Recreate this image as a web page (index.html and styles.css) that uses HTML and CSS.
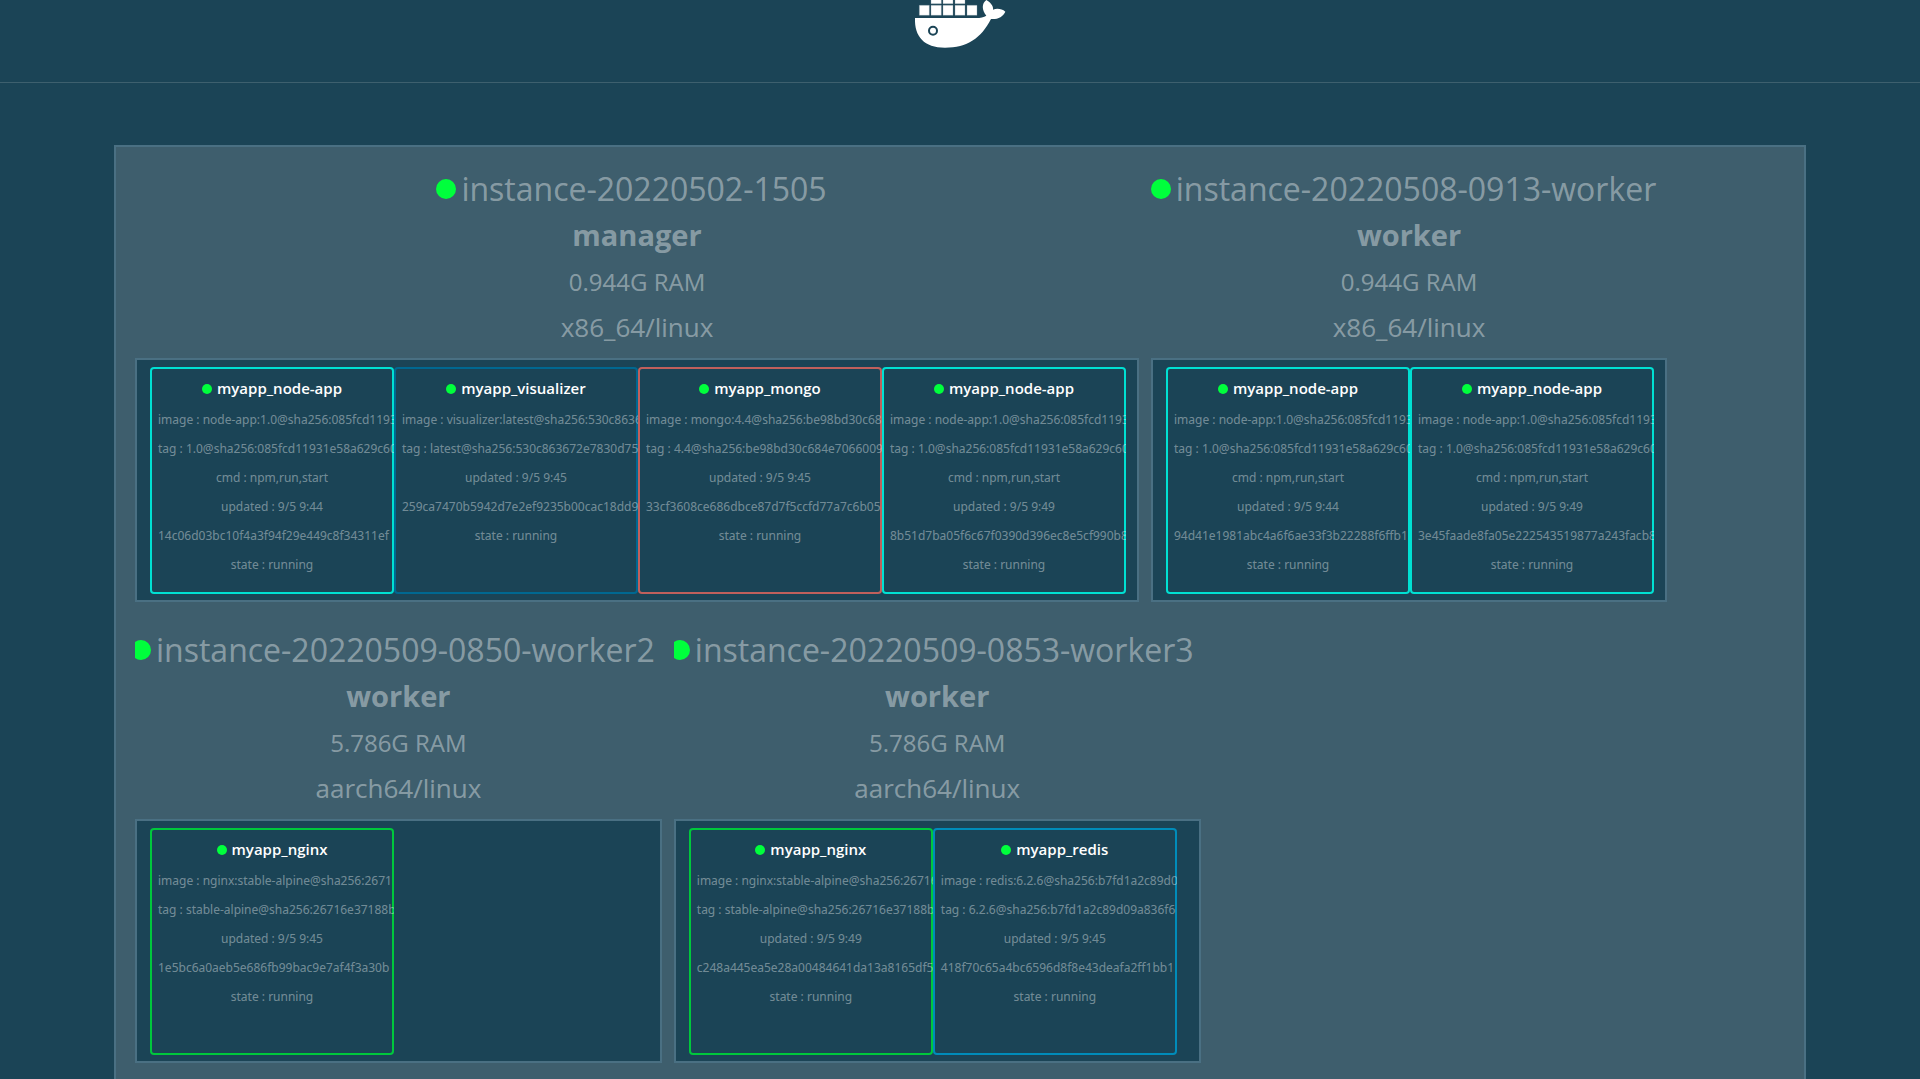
FILE: index.html
```html
<!DOCTYPE html>
<html lang="en">
<head>
<meta charset="utf-8">
<meta name="viewport" content="width=device-width, initial-scale=1">
<title>Visualizer</title>
<link rel="stylesheet" href="styles.css">
</head>
<body>
<header class="header">
  <svg class="logo" viewBox="102 0 276 144" role="img" aria-label="Docker">
    <g class="logo-crates">
      <path d="M153-20h31v31h-31zM189-20h30v31h-30zM225-20h30v31h-30z"/>
      <path d="M118 16h30v30h-30zM153 16h31v30h-31zM189 16h30v30h-30zM225 16h30v30h-30zM261 16h30v30h-30z"/>
    </g>
    <path class="logo-body" d="M105 54H288Q308 54 319 47C305 30 305 10 319 0C336 10 341 22 339 29C352 24 366 27 376 35C370 50 352 59 333 57C303 115 262 143 195 143C133 143 103 110 105 54Z"/>
    <circle class="logo-eye" cx="159" cy="92" r="12"/>
  </svg>
</header>
<main class="cluster">
  <section class="node">
    <h2 class="node-name"><span class="dot"></span>instance-20220502-1505</h2>
    <p class="node-role">manager</p>
    <p class="node-ram">0.944G RAM</p>
    <p class="node-arch">x86_64/linux</p>
    <ul class="tasks">
      <li class="task node-app">
        <h3 class="task-name"><span class="dot"></span>myapp_node-app</h3>
        <p>image : node-app:1.0@sha256:085fcd1193</p>
        <p>tag : 1.0@sha256:085fcd11931e58a629c60</p>
        <p>cmd : npm,run,start</p>
        <p>updated : 9/5 9:44</p>
        <p>14c06d03bc10f4a3f94f29e449c8f34311ef</p>
        <p>state : running</p>
      </li>
      <li class="task visualizer">
        <h3 class="task-name"><span class="dot"></span>myapp_visualizer</h3>
        <p>image : visualizer:latest@sha256:530c8636</p>
        <p>tag : latest@sha256:530c863672e7830d75</p>
        <p>updated : 9/5 9:45</p>
        <p>259ca7470b5942d7e2ef9235b00cac18dd9</p>
        <p>state : running</p>
      </li>
      <li class="task mongo">
        <h3 class="task-name"><span class="dot"></span>myapp_mongo</h3>
        <p>image : mongo:4.4@sha256:be98bd30c68</p>
        <p>tag : 4.4@sha256:be98bd30c684e7066009</p>
        <p>updated : 9/5 9:45</p>
        <p>33cf3608ce686dbce87d7f5ccfd77a7c6b05</p>
        <p>state : running</p>
      </li>
      <li class="task node-app">
        <h3 class="task-name"><span class="dot"></span>myapp_node-app</h3>
        <p>image : node-app:1.0@sha256:085fcd1193</p>
        <p>tag : 1.0@sha256:085fcd11931e58a629c60</p>
        <p>cmd : npm,run,start</p>
        <p>updated : 9/5 9:49</p>
        <p>8b51d7ba05f6c67f0390d396ec8e5cf990b8</p>
        <p>state : running</p>
      </li>
    </ul>
  </section>
  <section class="node">
    <h2 class="node-name"><span class="dot"></span>instance-20220508-0913-worker</h2>
    <p class="node-role">worker</p>
    <p class="node-ram">0.944G RAM</p>
    <p class="node-arch">x86_64/linux</p>
    <ul class="tasks">
      <li class="task node-app">
        <h3 class="task-name"><span class="dot"></span>myapp_node-app</h3>
        <p>image : node-app:1.0@sha256:085fcd1193</p>
        <p>tag : 1.0@sha256:085fcd11931e58a629c60</p>
        <p>cmd : npm,run,start</p>
        <p>updated : 9/5 9:44</p>
        <p>94d41e1981abc4a6f6ae33f3b22288f6ffb1</p>
        <p>state : running</p>
      </li>
      <li class="task node-app">
        <h3 class="task-name"><span class="dot"></span>myapp_node-app</h3>
        <p>image : node-app:1.0@sha256:085fcd1193</p>
        <p>tag : 1.0@sha256:085fcd11931e58a629c60</p>
        <p>cmd : npm,run,start</p>
        <p>updated : 9/5 9:49</p>
        <p>3e45faade8fa05e222543519877a243facb8</p>
        <p>state : running</p>
      </li>
    </ul>
  </section>
  <section class="node">
    <h2 class="node-name"><span class="dot"></span>instance-20220509-0850-worker2</h2>
    <p class="node-role">worker</p>
    <p class="node-ram">5.786G RAM</p>
    <p class="node-arch">aarch64/linux</p>
    <ul class="tasks">
      <li class="task nginx">
        <h3 class="task-name"><span class="dot"></span>myapp_nginx</h3>
        <p>image : nginx:stable-alpine@sha256:2671</p>
        <p>tag : stable-alpine@sha256:26716e37188b</p>
        <p>updated : 9/5 9:45</p>
        <p>1e5bc6a0aeb5e686fb99bac9e7af4f3a30b</p>
        <p>state : running</p>
      </li>
    </ul>
  </section>
  <section class="node">
    <h2 class="node-name"><span class="dot"></span>instance-20220509-0853-worker3</h2>
    <p class="node-role">worker</p>
    <p class="node-ram">5.786G RAM</p>
    <p class="node-arch">aarch64/linux</p>
    <ul class="tasks">
      <li class="task nginx">
        <h3 class="task-name"><span class="dot"></span>myapp_nginx</h3>
        <p>image : nginx:stable-alpine@sha256:26716</p>
        <p>tag : stable-alpine@sha256:26716e37188b</p>
        <p>updated : 9/5 9:49</p>
        <p>c248a445ea5e28a00484641da13a8165df5</p>
        <p>state : running</p>
      </li>
      <li class="task redis">
        <h3 class="task-name"><span class="dot"></span>myapp_redis</h3>
        <p>image : redis:6.2.6@sha256:b7fd1a2c89d0</p>
        <p>tag : 6.2.6@sha256:b7fd1a2c89d09a836f6</p>
        <p>updated : 9/5 9:45</p>
        <p>418f70c65a4bc6596d8f8e43deafa2ff1bb1</p>
        <p>state : running</p>
      </li>
    </ul>
  </section>
</main>
</body>
</html>
```
FILE: styles.css
```css
* {
  box-sizing: border-box;
  margin: 0;
  padding: 0;
}

body {
  background: #1b4456;
  color: rgba(255, 255, 255, 0.4);
  font-family: "Open Sans", sans-serif;
}

.header {
  display: flex;
  justify-content: center;
  padding-bottom: 34px;
  border-bottom: 1px solid #3e606e;
}

.logo {
  display: block;
  width: 92px;
  height: 48px;
}

.logo-crates,
.logo-body {
  fill: #fff;
}

.logo-crates {
  stroke: #8499a3;
  stroke-width: 1;
}

.logo-eye {
  fill: #fff;
  stroke: #1b4456;
  stroke-width: 6;
}

.cluster {
  display: flex;
  flex-wrap: wrap;
  gap: 25px 12px;
  margin: 62px 114px 0;
  padding: 19px 19px 25px;
  background: #3e5e6d;
  border: 2px solid #4a7083;
}

.node {
  overflow: hidden;
  text-align: center;
}

.node-name {
  display: flex;
  align-items: center;
  justify-content: center;
  gap: 5px;
  margin-left: -4px;
  padding-right: 7px;
  font-size: 32px;
  font-weight: 400;
  line-height: 46px;
  white-space: nowrap;
}

.dot {
  flex: none;
  width: 20px;
  height: 20px;
  border-radius: 50%;
  background: #00ff3c;
}

.node-role {
  font-size: 29px;
  font-weight: 700;
  line-height: 46px;
}

.node-ram {
  font-size: 24px;
  line-height: 48px;
}

.node-arch {
  font-size: 26px;
  line-height: 42px;
}

.tasks {
  display: flex;
  margin-top: 10px;
  padding: 7px 11px 6px 13px;
  background: #1b4456;
  border: 2px solid #4a7083;
  list-style: none;
}

.task {
  width: 244px;
  min-height: 227px;
  padding: 7px 8px;
  overflow: hidden;
  border-radius: 4px;
  box-shadow: inset 0 0 0 2px currentColor;
  font-family: "Noto Sans", sans-serif;
  font-size: 12px;
  line-height: 29px;
  white-space: nowrap;
}

.task p {
  color: rgba(255, 255, 255, 0.4);
}

.task-name {
  display: flex;
  align-items: center;
  justify-content: center;
  gap: 5px;
  margin-bottom: 2px;
  color: #fff;
  font-family: "Open Sans", sans-serif;
  font-size: 15px;
  font-weight: 600;
  line-height: 29px;
}

.task-name .dot {
  width: 10px;
  height: 10px;
}

.node-app {
  color: #00e0d3;
}

.visualizer {
  color: #006891;
}

.mongo {
  color: #c0605c;
}

.nginx {
  color: #00c83c;
}

.redis {
  color: #008cba;
}
```
